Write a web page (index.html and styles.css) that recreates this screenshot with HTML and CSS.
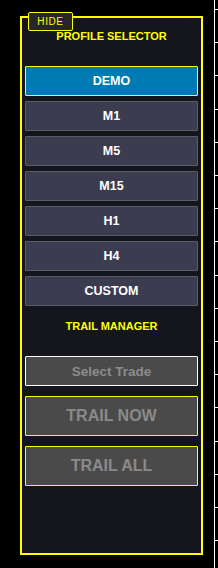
FILE: index.html
```
<!DOCTYPE html>
<html lang="en">
<head>
<meta charset="utf-8" />
<meta name="viewport" content="width=device-width, initial-scale=1" />
<title>Profile Selector</title>
<link rel="stylesheet" href="styles.css">
</head>
<body>
<div class="screen">
  <!-- Panel -->
  <section class="panel">
    <button class="hide-btn">HIDE</button>
    <div class="title">PROFILE SELECTOR</div>

    <div class="profiles">
      <button class="prof active">DEMO</button>
      <button class="prof">M1</button>
      <button class="prof">M5</button>
      <button class="prof">M15</button>
      <button class="prof">H1</button>
      <button class="prof">H4</button>
      <button class="prof">CUSTOM</button>
    </div>

    <div class="title sub">TRAIL MANAGER</div>

    <button class="select-trade">Select Trade</button>
    <button class="trail">TRAIL NOW</button>
    <button class="trail">TRAIL ALL</button>
  </section>

  <!-- Preisachse rechts -->
  <div class="axis"></div>
</div>
</body>
</html>
```

FILE: styles.css
```
:root{--bg:#000;--panel:#15151d;--yellow:#ffff00;--btn:#3c3c50;--btn-border:#5c5c66;--blue:#007ab3}
html,body{width:218px;height:568px;margin:0;background:var(--bg);overflow:hidden;font-family:"Liberation Sans",Arial,sans-serif}

.screen{display:flex;height:100%}

/* Panel */
.panel{position:relative;box-sizing:border-box;width:184px;height:539px;margin:16px 0 0 20px;border:2px solid var(--yellow);background:var(--panel);padding:0 3px;display:flex;flex-direction:column}
button{font-family:inherit;cursor:pointer;margin:0}

.hide-btn{position:absolute;left:6px;top:-6px;width:45px;height:19px;box-sizing:border-box;padding:0;background:#262626;border:1px solid var(--yellow);border-radius:2px;color:var(--yellow);font-size:10px;letter-spacing:.6px;line-height:17px}

.title{color:var(--yellow);font-weight:700;font-size:11px;text-align:center;line-height:13px;margin-top:12px}
.title.sub{margin-top:14px}

.profiles{display:flex;flex-direction:column;gap:5px;margin-top:23px}
.prof{height:30px;box-sizing:border-box;background:var(--btn);border:1px solid var(--btn-border);color:#fff;font-weight:700;font-size:12.5px;border-radius:1px}
.prof.active{background:var(--blue);border-color:var(--yellow)}

.select-trade{height:30px;box-sizing:border-box;margin-top:23px;background:#4a4a4a;border:1px solid #fff;border-radius:1px;color:#8c8c8c;font-weight:700;font-size:13.5px}
.trail{height:40px;box-sizing:border-box;margin-top:10px;background:#4a4a4a;border:1px solid var(--yellow);border-radius:1px;color:#8a8a8a;font-weight:700;font-size:16px}

/* Achse mit Ticks */
.axis{margin-left:11px;width:3px;height:100%;border-left:1px solid #fff;background:repeating-linear-gradient(to bottom,transparent 0,transparent 9px,#fff 9px,#fff 10px,transparent 10px,transparent 33.2px)}
```
